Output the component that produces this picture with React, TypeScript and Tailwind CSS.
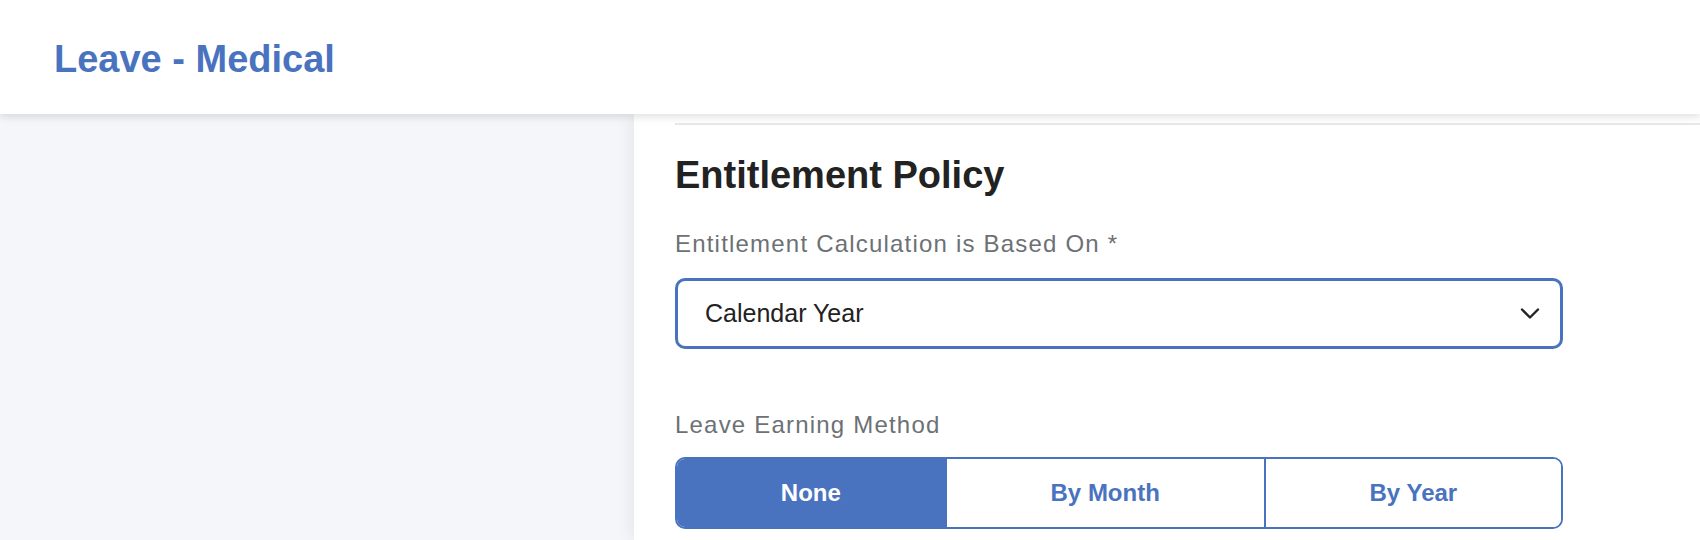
import React, { useState } from 'react'

const methods = ['None', 'By Month', 'By Year']

export default function App() {
  const [method, setMethod] = useState('None')

  return (
    <div
      className="h-[540px] overflow-hidden bg-white flex flex-col"
      style={{ fontFamily: '"Liberation Sans", Arial, sans-serif' }}
    >
      {/* Header */}
      <header className="relative z-10 h-[114px] shrink-0 bg-white flex items-center pl-[54px] pt-1 shadow-[0_3px_8px_rgba(0,0,0,0.12)]">
        <h1 className="text-[38px] font-bold text-[#4a73bf] leading-none">Leave - Medical</h1>
      </header>

      <div className="flex flex-1 min-h-0">
        {/* Left rail */}
        <aside className="w-[634px] shrink-0 bg-[#f5f6fa]" />

        {/* Content panel */}
        <main className="relative flex-1 bg-white pt-[9px] pl-[41px] shadow-[-6px_0_14px_rgba(0,0,0,0.05)]">
          <div className="h-[2px] bg-[#e8e8e8]" />

          <div className="w-[888px]">
            <h2 className="mt-[27px] text-[38px] leading-[46px] font-bold text-[#222222]">
              Entitlement Policy
            </h2>

            <FieldLabel className="mt-[30px]">Entitlement Calculation is Based On *</FieldLabel>

            <button
              type="button"
              className="mt-[18px] w-full h-[71px] flex items-center justify-between border-[3px] border-[#4a73bf] rounded-[10px] pl-[27px] pr-[20px] bg-white text-left"
            >
              <span className="text-[25px] text-[#222222]">Calendar Year</span>
              <svg width="20" height="13" viewBox="0 0 20 13" fill="none">
                <polyline
                  points="2,2.5 10,10.5 18,2.5"
                  stroke="#222222"
                  strokeWidth="2.4"
                  strokeLinecap="round"
                  strokeLinejoin="round"
                />
              </svg>
            </button>

            <FieldLabel className="mt-[60px]">Leave Earning Method</FieldLabel>

            <div className="mt-[16px] flex h-[72px] border-2 border-[#4a73bf] rounded-[10px] overflow-hidden">
              {methods.map((m, i) => (
                <button
                  key={m}
                  type="button"
                  onClick={() => setMethod(m)}
                  className={
                    'flex-auto flex items-center justify-center text-[24px] font-bold ' +
                    (i > 0 ? 'border-l-2 border-[#4a73bf] ' : '') +
                    (method === m ? 'bg-[#4a73bf] text-white' : 'bg-white text-[#4a73bf]')
                  }
                >
                  {m}
                </button>
              ))}
            </div>
          </div>
        </main>
      </div>
    </div>
  )
}

function FieldLabel({ className, children }: { className?: string; children: React.ReactNode }) {
  return (
    <div className={'text-[24px] leading-[32px] tracking-[0.05em] text-[#6c7176] ' + (className ?? '')}>
      {children}
    </div>
  )
}
